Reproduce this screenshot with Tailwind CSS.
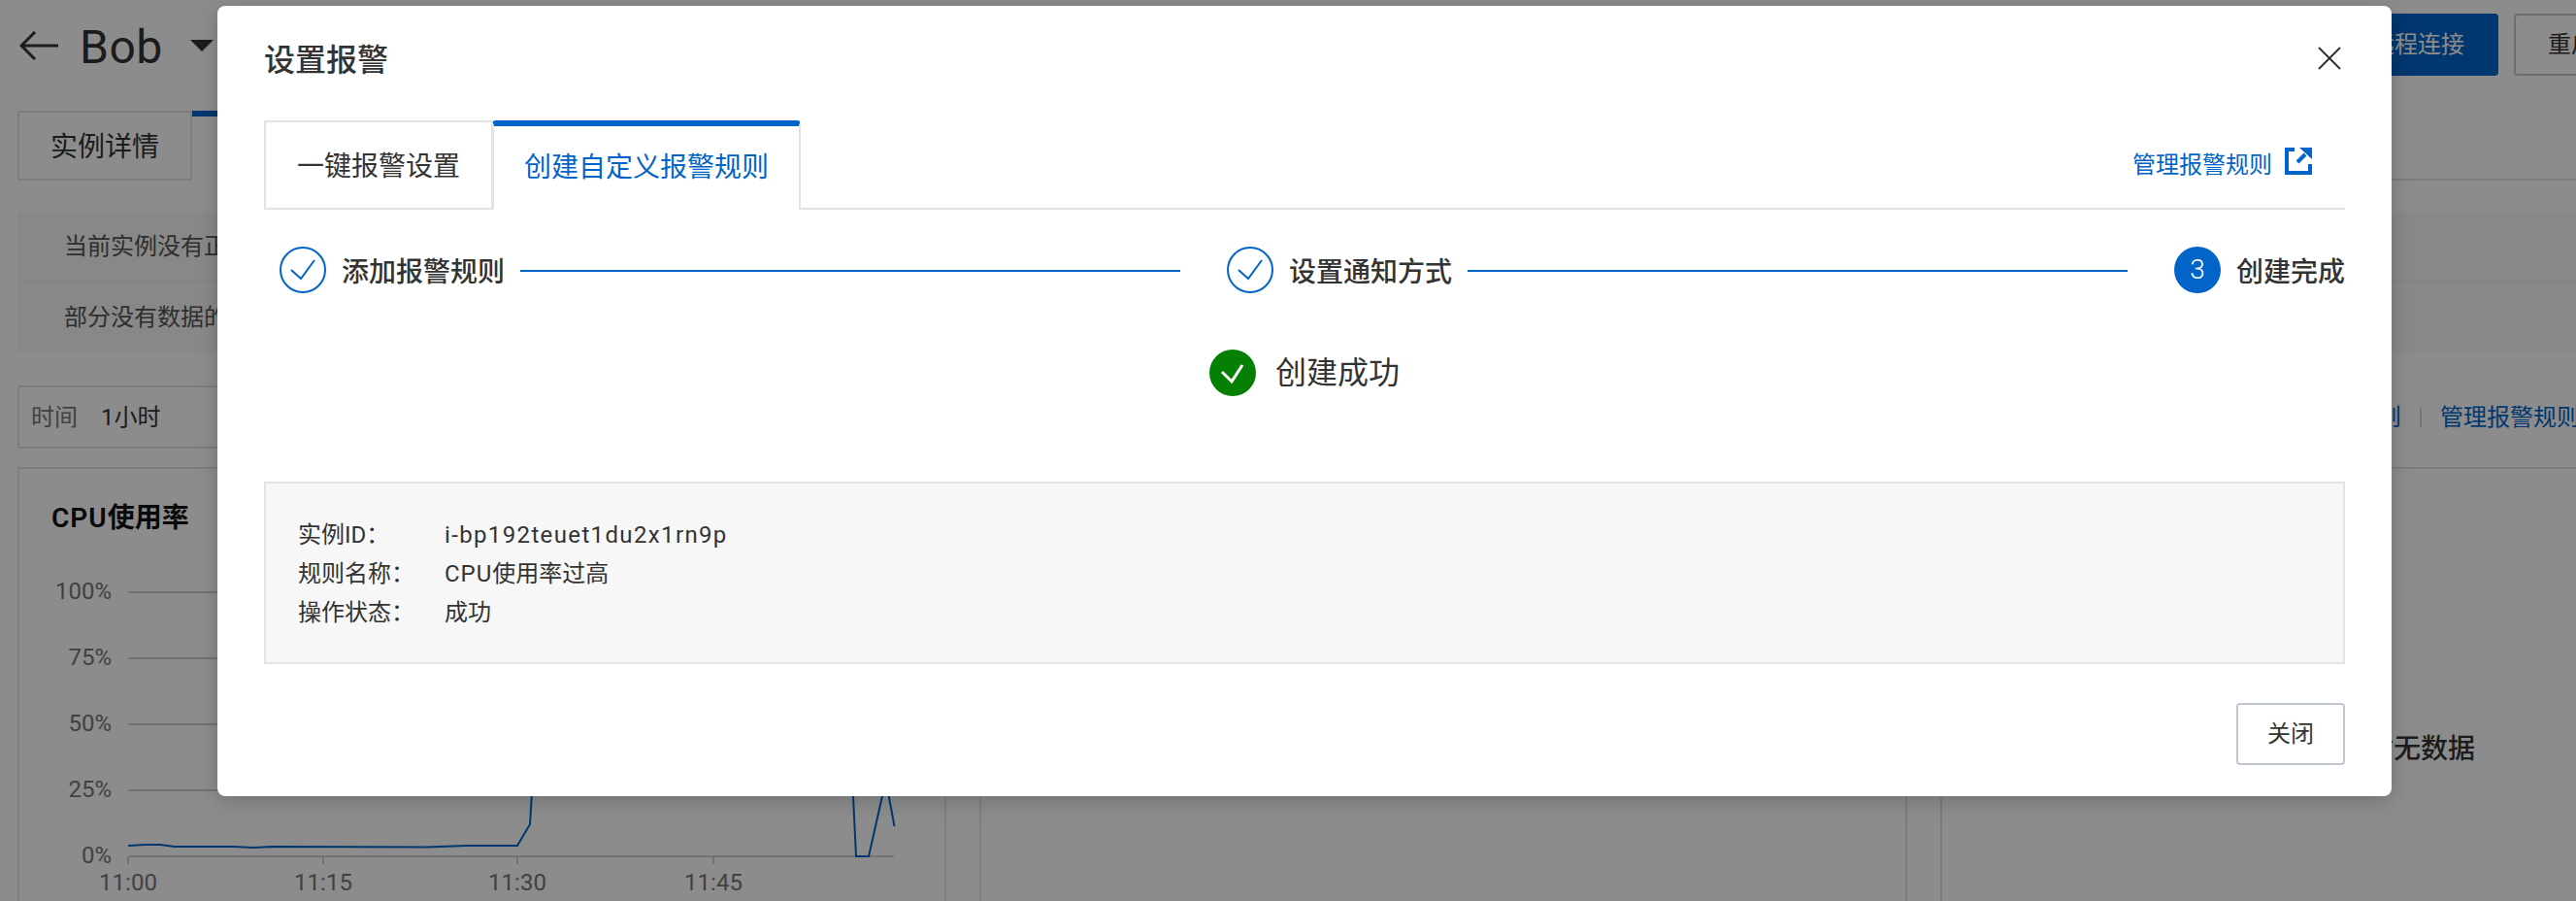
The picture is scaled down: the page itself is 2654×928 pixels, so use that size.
<!DOCTYPE html>
<html lang="zh-CN">
<head>
    <meta charset="UTF-8">
    <title>设置报警</title>
    <script src="https://cdn.jsdelivr.net/npm/@tailwindcss/browser@4"></script>
</head>
<body class="[font-family:Roboto,'Noto_Sans_CJK_SC',sans-serif] text-[#333]">
    <div class="relative h-[928px] w-[2654px] overflow-hidden bg-white">
        <!-- page behind the dialog -->
        <div class="px-[18px]">
            <div class="-mr-[72px] flex h-[114px] items-start pt-[14px]">
                <svg class="mt-[18px] ml-[2px] h-[30px] w-[40px]" viewBox="0 0 40 30" fill="none" stroke="#333" stroke-width="3"><path d="M40 15H2M16 1 2 15l14 14"/></svg>
                <span class="mt-[3px] ml-[22px] text-[48px] leading-[64px] tracking-[0.5px] text-[#333]">Bob</span>
                <svg class="mt-[27px] ml-[28px] h-[12px] w-[24px]" viewBox="0 0 24 12" fill="#333"><path d="M0 0h24L12 12z"/></svg>
                <div class="ml-auto flex gap-[16px]">
                    <button class="h-[64px] rounded-[4px] bg-[#0064c8] px-[35px] text-[24px] text-white">远程连接</button>
                    <button class="h-[64px] rounded-[4px] border-2 border-[#c1c7d0] px-[33px] text-[24px]">重启</button>
                </div>
            </div>
            <div class="-mr-[18px] flex h-[72px] border-b-2 border-[#e3e3e3]">
                <div class="flex h-[72px] w-[180px] items-center justify-center border-2 border-[#e3e3e3] pt-[3px] text-[28px]">实例详情</div>
                <div class="relative h-[72px] w-[320px] border-t-[6px] border-[#0064c8] bg-white"></div>
            </div>
            <div class="-mr-[18px] mt-[32px] bg-[#f7f7f7] text-[24px] text-[#555]">
                <div class="flex h-[73px] items-center border-b-2 border-[#f0f0f0] pl-[48px]">当前实例没有正确配置</div>
                <div class="flex h-[72px] items-center pl-[48px]">部分没有数据的监控项</div>
            </div>
            <div class="mt-[34px] flex h-[65px] items-center text-[24px]">
                <div class="flex h-[65px] w-[300px] items-center border-2 border-[#e3e3e3] pl-[12px]">
                    <span class="text-[#777]">时间</span>
                    <span class="ml-[24px]">1小时</span>
                </div>
                <div class="-mr-[22px] ml-auto flex items-center text-[#0064c8]">
                    <span>报警规则</span>
                    <span class="mx-[19px] h-[21px] w-[2px] bg-[#d8d8d8]"></span>
                    <span>管理报警规则</span>
                </div>
            </div>
            <div class="mt-[19px] flex gap-[34px]">
                <div class="h-[460px] w-[957px] shrink-0 border-2 border-[#e3e3e3]">
                    <div class="pt-[31px] pl-[33px] text-[28px] leading-[40px] font-semibold text-[#111]"><span class="tracking-[1px]">CPU</span>使用率</div>
                    <svg class="mt-[26px] block h-[348px] w-[953px]" viewBox="20 580 953 348" fill="none">
                        <g stroke="#d0d0d0" stroke-width="2">
                            <path d="M132 610H921M132 678H921M132 746H921M132 814H921M132 882H921"/>
                            <path d="M132 882v8M333 882v8M533 882v8M735 882v8"/>
                        </g>
                        <path d="M132 871 150 870 165 870 180 872 240 872 262 873 280 872 440 872.5 480 871 533 871 546 849 549 800 560 700M870 700 879 820 882 882 895 882 909 820 912 800 921.5 851" stroke="#0064c8" stroke-width="2"/>
                        <g class="text-[24px]" fill="#777" text-anchor="end">
                            <text x="115" y="617">100%</text>
                            <text x="115" y="685">75%</text>
                            <text x="115" y="753">50%</text>
                            <text x="115" y="821">25%</text>
                            <text x="115" y="889">0%</text>
                        </g>
                        <g class="text-[24px]" fill="#777" text-anchor="middle">
                            <text x="132" y="917">11:00</text>
                            <text x="333" y="917">11:15</text>
                            <text x="533" y="917">11:30</text>
                            <text x="735" y="917">11:45</text>
                        </g>
                    </svg>
                </div>
                <div class="h-[460px] w-[956px] shrink-0 border-2 border-[#e3e3e3]"></div>
                <div class="h-[460px] w-[957px] shrink-0 border-2 border-[#e3e3e3] pt-[269px] pl-[437px] text-[28px] leading-[40px] font-medium">暂无数据</div>
            </div>
        </div>

        <!-- overlay + dialog -->
        <div class="absolute inset-0 bg-black/45 pt-[6px] pl-[224px]">
            <div class="relative flex h-[814px] w-[2240px] flex-col rounded-lg bg-white px-[48px] pt-[34px] shadow-[0_4px_20px_rgba(0,0,0,0.2)]">
                <h2 class="pt-[2px] text-[32px] leading-[40px] font-medium text-[#333]">设置报警</h2>
                <svg class="absolute top-[42px] right-[52px] h-[24px] w-[24px]" viewBox="0 0 24 24" fill="none" stroke="#333" stroke-width="2"><path d="M1 1l22 22M23 1 1 23"/></svg>

                <div class="mt-[42px] flex h-[92px] border-b-2 border-[#e3e3e3]">
                    <div class="flex h-[92px] w-[236px] items-center justify-center border-2 border-[#e3e3e3] pt-[4px] text-[28px]">一键报警设置</div>
                    <div class="relative -ml-[1px] flex h-[92px] w-[318px] items-center justify-center rounded-t-[4px] border-x-2 border-t-[6px] border-[#e3e3e3] border-t-[#0064c8] bg-white text-[28px] text-[#0064c8]">创建自定义报警规则</div>
                    <div class="mr-[34px] ml-auto flex items-start gap-[13px] text-[24px] leading-[36px] text-[#0064c8]">
                        <span class="mt-[28px]">管理报警规则</span>
                        <svg class="mt-[28px] h-[28px] w-[28px]" viewBox="0 0 28 28" fill="none" stroke="#0064c8" stroke-width="4"><path d="M10 2H2v24h24V17"/><path d="M15 0H28V12Z" fill="#0064c8" stroke="none"/><path d="M21 7 13 15"/></svg>
                    </div>
                </div>

                <div class="mt-[38px] flex items-center pl-[16px]">
                    <svg class="h-[48px] w-[48px] shrink-0" viewBox="0 0 48 48" fill="none" stroke="#0064c8" stroke-width="2"><circle cx="24" cy="24" r="23"/><path d="M12 24l10 9L36 14"/></svg>
                    <span class="mt-[6px] ml-[16px] text-[28px] font-medium">添加报警规则</span>
                    <span class="mx-[16px] mt-[2px] h-[2px] flex-1 bg-[#0064c8]"></span>
                    <svg class="ml-[32px] h-[48px] w-[48px] shrink-0" viewBox="0 0 48 48" fill="none" stroke="#0064c8" stroke-width="2"><circle cx="24" cy="24" r="23"/><path d="M12 24l10 9L36 14"/></svg>
                    <span class="mt-[6px] ml-[16px] text-[28px] font-medium">设置通知方式</span>
                    <span class="mx-[16px] mt-[2px] h-[2px] flex-1 bg-[#0064c8]"></span>
                    <span class="ml-[32px] flex h-[48px] w-[48px] shrink-0 items-center justify-center rounded-full bg-[#0064c8] text-[28px] font-light text-white">3</span>
                    <span class="mt-[6px] ml-[16px] text-[28px] font-medium">创建完成</span>
                </div>

                <div class="mt-[58px] flex items-center justify-center gap-[20px]">
                    <svg class="h-[48px] w-[48px]" viewBox="0 0 48 48"><circle cx="24" cy="24" r="24" fill="#058005"/><path d="M13 23l10 10L34 16" fill="none" stroke="#fff" stroke-width="3"/></svg>
                    <span class="text-[32px]">创建成功</span>
                </div>

                <div class="mt-[88px] h-[188px] border-2 border-[#e3e3e3] bg-[#f7f7f7] px-[33px] pt-[33px] text-[24px] leading-[40px]">
                    <div class="flex"><span class="w-[151px]">实例ID：</span><span class="tracking-[1.36px]">i-bp192teuet1du2x1rn9p</span></div>
                    <div class="flex"><span class="w-[151px]">规则名称：</span><span><span class="tracking-[1px]">CPU</span>使用率过高</span></div>
                    <div class="flex"><span class="w-[151px]">操作状态：</span><span>成功</span></div>
                </div>

                <div class="mt-[40px] flex justify-end">
                    <button class="h-[64px] w-[112px] rounded-[4px] border-2 border-[#c1c7d0] text-[24px]">关闭</button>
                </div>
            </div>
        </div>
    </div>
</body>
</html>
